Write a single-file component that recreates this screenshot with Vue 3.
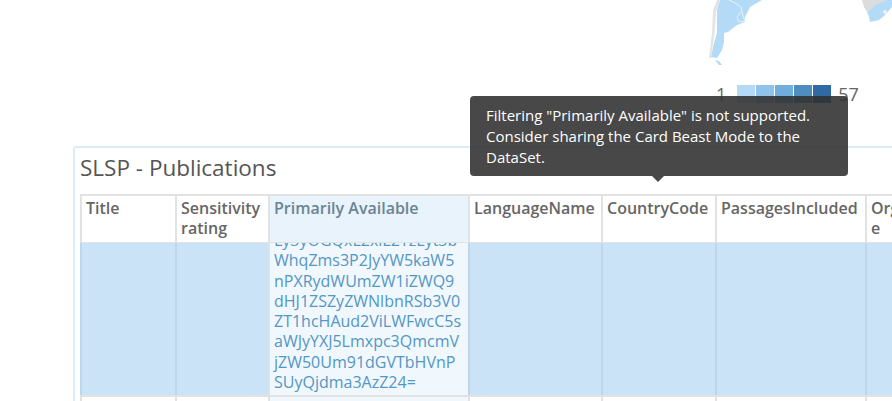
<script setup>
const headers = [
  { label: 'Title', w: 95 },
  { label: 'Sensitivity rating', w: 93 },
  { label: 'Primarily Available', w: 200, active: true },
  { label: 'LanguageName', w: 133 },
  { label: 'CountryCode', w: 114 },
  { label: 'PassagesIncluded', w: 150 },
  { label: 'OrganizationName', w: 152 }
]
const lines = [
  'Ly3yOGQxL2xiL2YzLyt3b',
  'WhqZms3P2JyYW5kaW5',
  'nPXRydWUmZW1iZWQ9',
  'dHJ1ZSZyZWNlbnRSb3V0',
  'ZT1hcHAud2ViLWFwcC5s',
  'aWJyYXJ5Lmxpc3QmcmV',
  'jZW50Um91dGVTbHVnP',
  'SUyQjdma3AzZ24='
]
const swatches = ['#b3daf6', '#8fc4e8', '#70afdc', '#4f8dbf', '#2f6aa3']
</script>

<template>
  <div class="page">
    <section class="map-area">
      <svg class="map" width="892" height="78" viewBox="0 0 892 78">
        <path d="M717 0 L713 10 L712 33 L710 50 L709 58 L711 58 L713 44 L715 30 L716 12 L720 0 Z" fill="#e4e4e4" />
        <path d="M720 0 L717 10 L717 33 L714 43 L711 57 L717 58 L722 50 L724 42 L724 33 L728 32 L737 25 L745 22 L745 17 L750 7 L762 0 Z" fill="#b3daf6" />
        <path d="M715 60 L719 61 L722 65 L719 65 Z" fill="#b3daf6" />
        <path d="M729 0 L735 3 L741 7 L743 16 L745 21 L739 22 L737 17 L741 12" fill="none" stroke="#e6f3fc" stroke-width="1" />
        <path d="M862 0 L887 0 L872 8 L867 12 L864 7 Z" fill="#dcdcdc" />
        <path d="M867 12 L872 8 L875 5 L887 0 L892 0 L892 7 L885 15 L879 20 L870 22 L869 17 Z" fill="#b3daf6" />
        <circle cx="885" cy="12" r="2" fill="#e6f3fc" />
      </svg>
      <div class="legend">
        <span class="legend-label">1</span>
        <div class="swatches">
          <span v-for="c in swatches" :key="c" class="swatch" :style="{ background: c }"></span>
        </div>
        <span class="legend-label">57</span>
      </div>
    </section>

    <section class="card">
      <h2 class="card-title">SLSP - Publications</h2>
      <div class="table">
        <div class="row head">
          <div
            v-for="h in headers"
            :key="h.label"
            class="cell head-cell"
            :class="{ active: h.active }"
            :style="{ width: h.w + 'px' }"
          >{{ h.label }}</div>
        </div>
        <div class="row selected">
          <div
            v-for="h in headers"
            :key="h.label"
            class="cell body-cell"
            :class="{ active: h.active }"
            :style="{ width: h.w + 'px' }"
          >
            <div v-if="h.active" class="clip">
              <div v-for="l in lines" :key="l">{{ l }}</div>
            </div>
          </div>
        </div>
        <div class="row">
          <div
            v-for="h in headers"
            :key="h.label"
            class="cell plain-cell"
            :class="{ active: h.active }"
            :style="{ width: h.w + 'px' }"
          ></div>
        </div>
      </div>
    </section>

    <div class="tooltip">
      Filtering "Primarily Available" is not supported.<br />
      Consider sharing the Card Beast Mode to the<br />
      DataSet.
    </div>
  </div>
</template>

<style>
html, body {
  margin: 0;
  background: #fff;
  overflow: hidden;
}
</style>

<style scoped>
.page {
  position: relative;
  width: 892px;
  height: 401px;
  overflow: hidden;
  font-family: "Open Sans", "Noto Sans", sans-serif;
  color: #555;
}
.map-area {
  height: 146px;
  position: relative;
}
.map {
  display: block;
}
.legend {
  position: absolute;
  left: 716px;
  top: 85px;
  display: flex;
  align-items: center;
  height: 18px;
  white-space: nowrap;
}
.legend-label {
  font-size: 18px;
  color: #666;
  line-height: 18px;
}
.swatches {
  display: flex;
  gap: 1px;
  margin: 0 7px 0 11px;
}
.swatch {
  width: 18px;
  height: 18px;
}
.card {
  box-sizing: border-box;
  margin-left: 73px;
  width: 900px;
  height: 300px;
  border: 2px solid #dcecf7;
  border-radius: 3px;
  padding: 0 0 0 5px;
}
.card-title {
  margin: 0;
  height: 46px;
  font-size: 22.5px;
  font-weight: 400;
  line-height: 40px;
  color: #555;
}
.table {
  width: 950px;
  border-top: 2px solid #e2e2e2;
}
.row {
  display: flex;
}
.cell {
  box-sizing: border-box;
  flex: none;
  border-left: 2px solid #e2e2e2;
}
.head {
  height: 46px;
  border-bottom: 1px solid #e2e2e2;
  box-sizing: content-box;
}
.head-cell {
  padding: 2px 4px 0 4px;
  font-size: 16px;
  font-weight: 600;
  line-height: 20px;
  color: #666;
  overflow: hidden;
  overflow-wrap: anywhere;
}
.head-cell.active {
  background: #e8f3fb;
  color: #6b8494;
}
.selected {
  height: 152px;
  background: #cbe3f7;
  border-bottom: 2px solid #e2e2e2;
}
.body-cell {
  height: 152px;
  border-left-color: #bfd6e8;
  overflow: hidden;
}
.body-cell.active {
  background: #f0f8fd;
  border-left-color: #d4e4ef;
}
.clip {
  margin-top: -13px;
  padding-left: 4px;
  font-size: 16px;
  line-height: 20.3px;
  color: #5496c4;
  white-space: nowrap;
}
.plain-cell {
  height: 60px;
}
.plain-cell.active {
  background: #f0f8fd;
}
.tooltip {
  position: absolute;
  left: 470px;
  top: 96px;
  box-sizing: border-box;
  width: 378px;
  height: 80px;
  padding: 9px 16px;
  border-radius: 4px;
  background: rgba(48, 48, 48, 0.885);
  color: #fff;
  font-size: 15px;
  line-height: 21px;
  white-space: nowrap;
}
.tooltip::after {
  content: "";
  position: absolute;
  left: 182px;
  top: 80px;
  border-style: solid;
  border-width: 6px 6px 0 6px;
  border-color: rgba(48, 48, 48, 0.885) transparent transparent transparent;
}
</style>
